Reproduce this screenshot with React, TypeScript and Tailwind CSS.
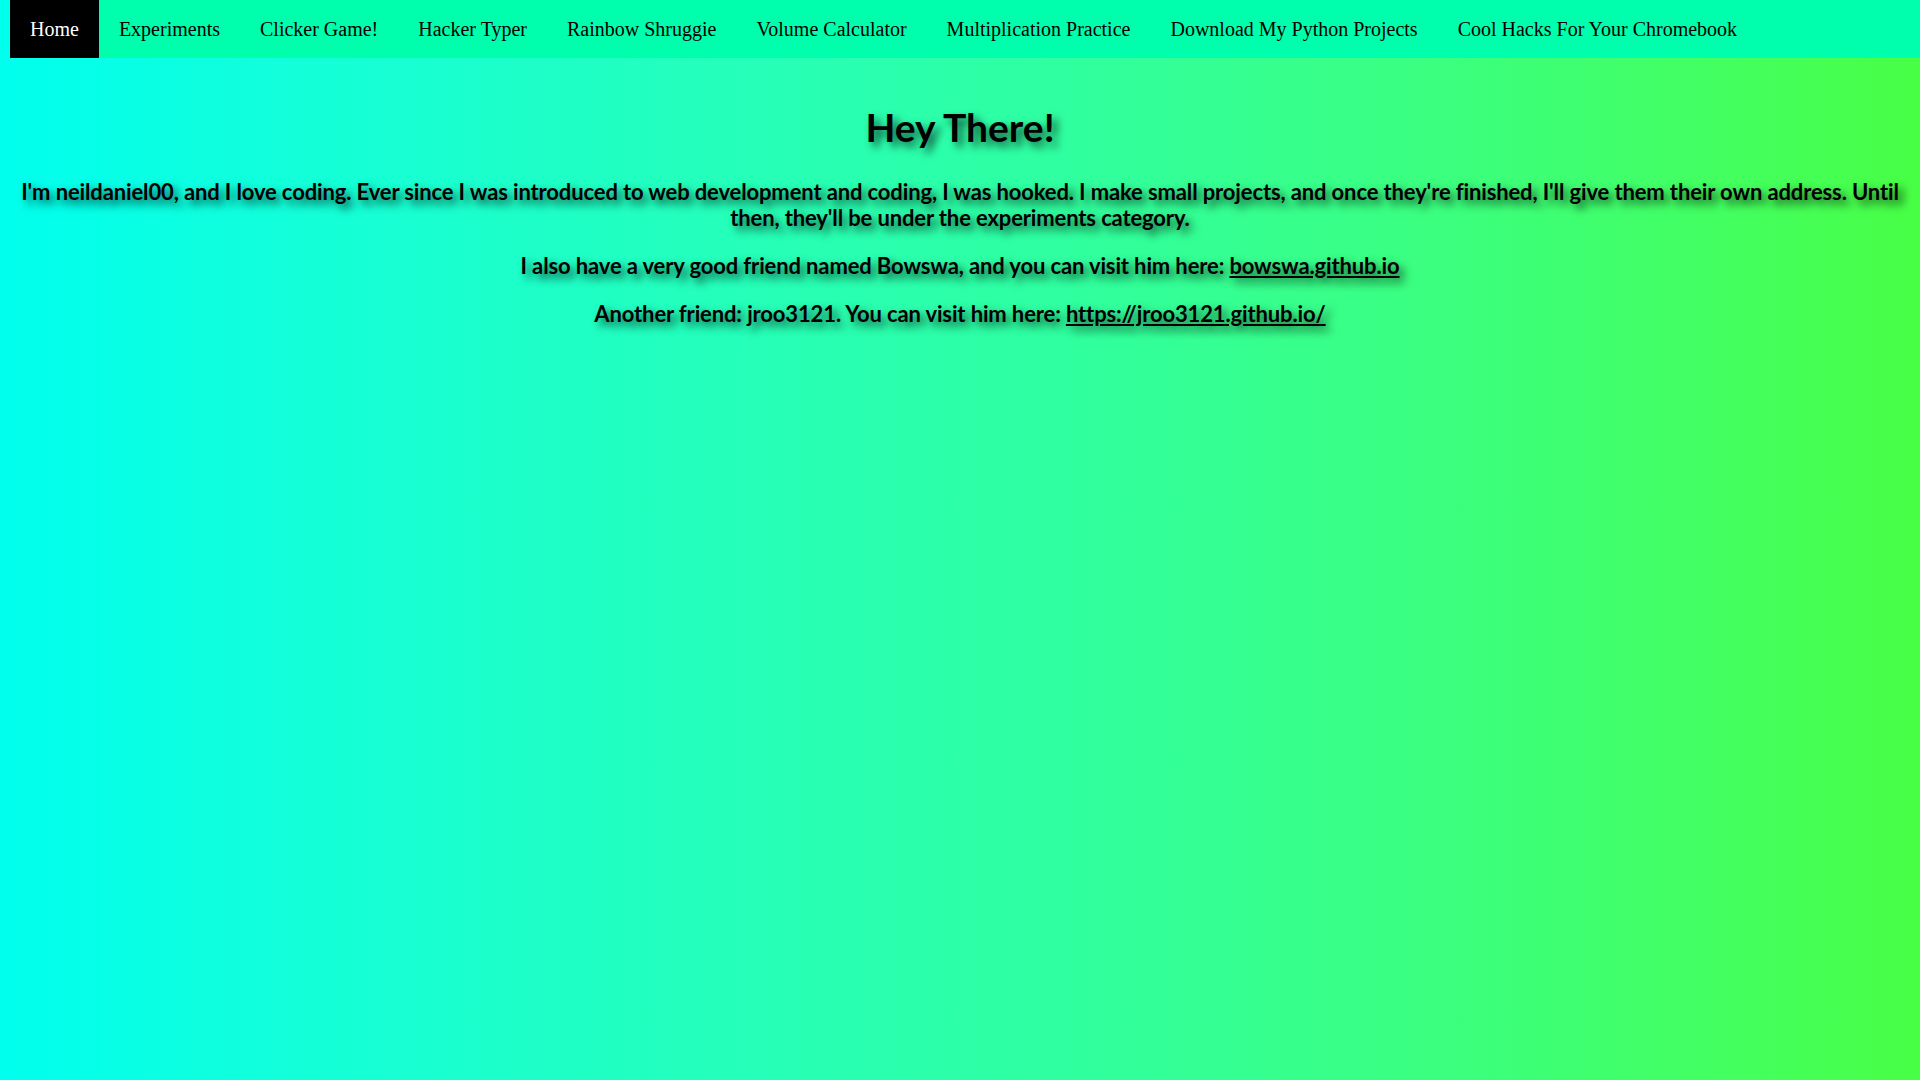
import React from "react";

const navItems = [
  "Home",
  "Experiments",
  "Clicker Game!",
  "Hacker Typer",
  "Rainbow Shruggie",
  "Volume Calculator",
  "Multiplication Practice",
  "Download My Python Projects",
  "Cool Hacks For Your Chromebook",
];

export default function App() {
  return (
    <div className="min-h-screen w-full bg-gradient-to-r from-[#00ffee] to-[#48ff44]">
      {/* top nav */}
      <nav className="pl-[10px]">
        <ul className="flex h-[58px] bg-[#00ffad] font-['Liberation_Serif',serif] text-[20px]">
          {navItems.map((item, idx) => (
            <li key={item} className="flex">
              <a
                href="#"
                className={`flex items-center px-5 ${
                  idx === 0 ? "bg-black text-white" : "text-black"
                }`}
              >
                {item}
              </a>
            </li>
          ))}
        </ul>
      </nav>

      <main className="px-5 text-center font-['Lato',sans-serif] font-bold text-black [text-shadow:5px_5px_9px_rgba(0,0,0,0.7)]">
        <h1 className="mt-[45px] mb-[28px] text-[39px] leading-[48px]">Hey There!</h1>
        <p className="text-[22px] leading-[26px] tracking-[-0.13px]">
          I'm neildaniel00, and I love coding. Ever since I was introduced to web development and
          coding, I was hooked. I make small projects, and once they're finished, I'll give them their
          own address. Until then, they'll be under the experiments category.
        </p>
        <p className="mt-[22px] text-[22px] leading-[26px] tracking-[-0.13px]">
          I also have a very good friend named Bowswa, and you can visit him here:{" "}
          <a href="#" className="underline">bowswa.github.io</a>
        </p>
        <p className="mt-[22px] text-[22px] leading-[26px] tracking-[-0.13px]">
          Another friend: jroo3121. You can visit him here:{" "}
          <a href="#" className="underline">https://jroo3121.github.io/</a>
        </p>
      </main>
    </div>
  );
}
